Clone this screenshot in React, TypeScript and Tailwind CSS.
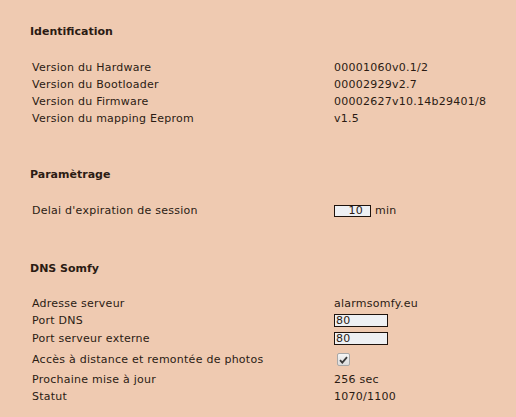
import type { ReactNode } from 'react'

const font = { fontFamily: '"DejaVu Sans", Verdana, sans-serif' }

function Heading({ children }: { children: ReactNode }) {
  return <div className="pl-[30px] h-[17px] leading-[17px] font-bold tracking-normal">{children}</div>
}

function Row({ label, h = 'h-[17px]', children }: { label: string; h?: string; children: ReactNode }) {
  return (
    <div className={`flex items-center ${h}`}>
      <div className="w-[334px] pl-[32px] shrink-0">{label}</div>
      <div className="flex items-center">{children}</div>
    </div>
  )
}

function TextBox({ value, className }: { value: string; className: string }) {
  return (
    <input
      readOnly
      value={value}
      className={`border border-[#1e120c] bg-[#eef0f3] text-[11px] leading-none text-[#2b1b13] outline-none p-0 ${className}`}
      style={font}
    />
  )
}

function CheckBox() {
  return (
    <span className="ml-[3px] w-[13px] h-[13px] border border-[#a8a8a8] rounded-[2px] bg-gradient-to-b from-[#f6f6f6] to-[#dcdcdc] flex items-center justify-center">
      <svg width="9" height="8" viewBox="0 0 9 8">
        <path d="M1 4.2 L3.3 6.6 L8 1.2" fill="none" stroke="#3a3a3a" strokeWidth="1.8" />
      </svg>
    </span>
  )
}

export default function App() {
  return (
    <div
      className="w-[516px] h-[417px] bg-[#efcab1] text-[#2b1b13] text-[11px] leading-[17px] tracking-[0.25px] overflow-hidden"
      style={font}
    >
      <div className="pt-[23px]">
        <Heading>Identification</Heading>
        <div className="mt-[19px]">
          <Row label="Version du Hardware">00001060v0.1/2</Row>
          <Row label="Version du Bootloader">00002929v2.7</Row>
          <Row label="Version du Firmware">00002627v10.14b29401/8</Row>
          <Row label="Version du mapping Eeprom">v1.5</Row>
        </div>

        <div className="mt-[39px]">
          <Heading>Paramètrage</Heading>
        </div>
        <div className="mt-[19px]">
          <Row label="Delai d'expiration de session">
            <TextBox value="10" className="w-[37px] h-[12px] text-right pr-[7px]" />
            <span className="ml-[4px]">min</span>
          </Row>
        </div>

        <div className="mt-[41px]">
          <Heading>DNS Somfy</Heading>
        </div>
        <div className="mt-[18px]">
          <Row label="Adresse serveur">alarmsomfy.eu</Row>
          <Row label="Port DNS">
            <TextBox value="80" className="w-[54px] h-[13px] pl-[1px]" />
          </Row>
          <Row label="Port serveur externe" h="h-[19px]">
            <TextBox value="80" className="w-[54px] h-[13px] pl-[1px]" />
          </Row>
          <Row label="Accès à distance et remontée de photos" h="h-[23px]">
            <CheckBox />
          </Row>
          <Row label="Prochaine mise à jour">256 sec</Row>
          <Row label="Statut">1070/1100</Row>
        </div>
      </div>
    </div>
  )
}
